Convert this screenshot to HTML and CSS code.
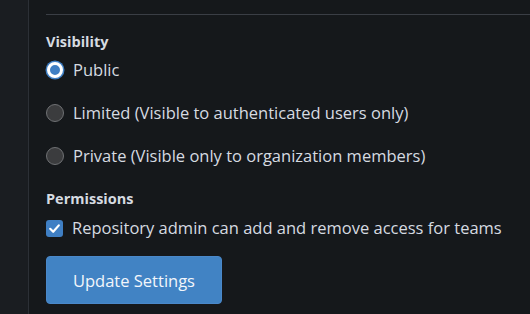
FILE: index.html
```html
<!DOCTYPE html>
<html lang="en">
<head>
    <meta charset="UTF-8">
    <meta name="viewport" content="width=device-width, initial-scale=1.0">
    <title>Team Settings</title>
    <link rel="stylesheet" href="styles.css">
</head>
<body>
    <div class="page">
        <div class="sidebar"></div>
        <div class="main">
            <div class="divider"></div>

            <div class="field visibility">
                <div class="field-label">Visibility</div>
                <label class="option">
                    <span class="radio checked"></span>
                    <span>Public</span>
                </label>
                <label class="option">
                    <span class="radio"></span>
                    <span>Limited (Visible to authenticated users only)</span>
                </label>
                <label class="option">
                    <span class="radio"></span>
                    <span>Private (Visible only to organization members)</span>
                </label>
            </div>

            <div class="field">
                <div class="field-label">Permissions</div>
                <label class="option check-row">
                    <span class="checkbox">
                        <svg width="13" height="13" viewBox="0 0 13 13">
                            <path d="M2.2 6.8 L5.2 9.8 L10.8 3.4" fill="none" stroke="#fff" stroke-width="2.2" stroke-linecap="round" stroke-linejoin="round"/>
                        </svg>
                    </span>
                    <span>Repository admin can add and remove access for teams</span>
                </label>
            </div>

            <button class="btn">Update Settings</button>
        </div>
    </div>
</body>
</html>
```

FILE: styles.css
```css
/* Basic styling */
body {
    margin: 0;
    background-color: #15181b;
    color: #d6dbe1;
    font-family: "Open Sans", "Noto Sans", sans-serif;
}

.page {
    display: flex;
    height: 314px;
    overflow: hidden;
}

.sidebar {
    width: 28px;
    flex-shrink: 0;
    background-color: #1a1d21;
    border-right: 1px solid #2c3036;
}

.main {
    flex: 1;
    padding-left: 17px;
    padding-top: 14px;
}

.divider {
    height: 1px;
    background-color: #3a3e45;
}

.field {
    display: flex;
    flex-direction: column;
}

.field.visibility {
    margin-top: 17px;
}

.field-label {
    font-size: 14.5px;
    font-weight: 700;
    line-height: 20px;
    color: #d6dbe1;
}

.option {
    display: flex;
    align-items: center;
    gap: 9px;
    font-size: 16.5px;
    line-height: 22px;
    height: 22px;
    margin-bottom: 21px;
    cursor: pointer;
}

.field-label + .option {
    margin-top: 7px;
}

.option:last-child {
    margin-bottom: 22px;
}

.radio {
    width: 16px;
    height: 16px;
    border-radius: 50%;
    background-color: #3b3c3e;
    border: 1px solid #6f7174;
    flex-shrink: 0;
}

.radio.checked {
    width: 10px;
    height: 10px;
    background-color: #3f7fc4;
    border: 3px solid #fff;
    box-shadow: 0 0 0 1.5px #3f7fc4;
    margin: 0 1px;
}

.field-label + .check-row {
    margin-top: 8px;
}

.check-row:last-child {
    margin-bottom: 17px;
}

.checkbox {
    width: 17px;
    height: 17px;
    border-radius: 3px;
    background-color: #3f7fc4;
    display: flex;
    align-items: center;
    justify-content: center;
    flex-shrink: 0;
}

.btn {
    display: block;
    width: 176px;
    height: 48px;
    border: 1px solid #4a88c9;
    border-radius: 4px;
    background-color: #4183c4;
    color: #f2f6fb;
    font-family: "Open Sans", "Noto Sans", sans-serif;
    font-size: 16.5px;
    cursor: pointer;
}
```
